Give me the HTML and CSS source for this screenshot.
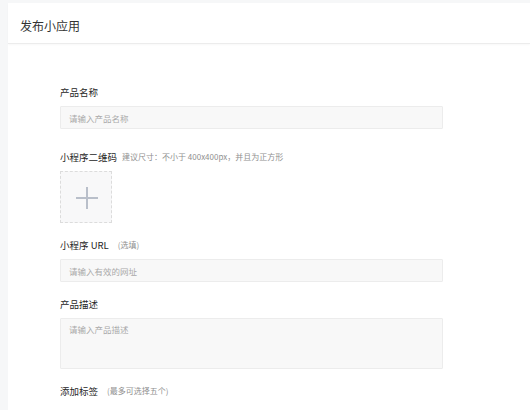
FILE: index.html
```html
<!DOCTYPE html>
<html lang="zh-CN">
<head>
<meta charset="utf-8">
<title>发布小应用</title>
<link rel="stylesheet" href="styles.css">
</head>
<body>
<div class="card">
  <header class="card-header">
    <h1 class="title">发布小应用</h1>
  </header>
  <form class="form">
    <div class="field field-first">
      <div class="label">产品名称</div>
      <div class="input"><span class="placeholder">请输入产品名称</span></div>
    </div>
    <div class="field">
      <div class="label">小程序二维码<span class="hint hint-near">建议尺寸：不小于 400x400px，并且为正方形</span></div>
      <div class="upload">
        <span class="plus-h"></span>
        <span class="plus-v"></span>
      </div>
    </div>
    <div class="field">
      <div class="label">小程序 URL<span class="hint">(选填)</span></div>
      <div class="input"><span class="placeholder">请输入有效的网址</span></div>
    </div>
    <div class="field">
      <div class="label">产品描述</div>
      <div class="textarea"><span class="placeholder">请输入产品描述</span></div>
    </div>
    <div class="field">
      <div class="label">添加标签<span class="hint">(最多可选择五个)</span></div>
    </div>
  </form>
</div>
</body>
</html>
```

FILE: styles.css
```css
html, body {
  margin: 0;
  padding: 0;
}
body {
  background: #f6f7f8;
  font-family: "Noto Sans CJK SC", "Noto Sans", sans-serif;
  color: #333;
  height: 410px;
  overflow: hidden;
}
.card {
  margin: 3px 0 0 8px;
  background: #fff;
  min-height: 420px;
}
.card-header {
  height: 40px;
  border-bottom: 1px solid #ececec;
  box-shadow: 0 1px 2px rgba(0,0,0,0.03);
  display: flex;
  align-items: center;
  padding-left: 12px;
}
.title {
  margin: 0;
  font-size: 12px;
  font-weight: normal;
  color: #333;
  line-height: 16px;
  position: relative;
  top: 3px;
}
.form {
  padding: 40px 0 0 52px;
  width: 383px;
  display: flex;
  flex-direction: column;
  gap: 14px;
}
.field {
  display: flex;
  flex-direction: column;
  gap: 6px;
}
.field-first {
  margin-bottom: 6px;
}
.label {
  font-size: 9.5px;
  line-height: 16px;
  height: 16px;
  color: #262626;
  font-weight: normal;
  display: flex;
  align-items: center;
}
.hint {
  font-size: 8px;
  font-weight: normal;
  color: #8f8f8f;
  margin-left: 9px;
}
.hint-near {
  margin-left: 5px;
}
.input {
  height: 21px;
  border: 1px solid #ececec;
  background: #f8f8f8;
  border-radius: 1px;
  display: flex;
  align-items: center;
  padding-left: 8px;
}
.textarea {
  border: 1px solid #ececec;
  background: #f8f8f8;
  border-radius: 1px;
  padding: 4px 0 0 8px;
  box-sizing: border-box;
  height: 51px;
  display: flex;
  align-items: flex-start;
}
.placeholder {
  font-size: 8.5px;
  color: #a9a9a9;
  line-height: 12px;
}
.upload {
  width: 50px;
  height: 50px;
  border: 1px dashed #dcdcdc;
  background: #f8f8f9;
  position: relative;
}
.plus-h, .plus-v {
  position: absolute;
  background: #b9bfca;
}
.plus-h {
  width: 22px;
  height: 2px;
  left: 15px;
  top: 25px;
}
.plus-v {
  width: 2px;
  height: 22px;
  left: 25px;
  top: 15px;
}
```
